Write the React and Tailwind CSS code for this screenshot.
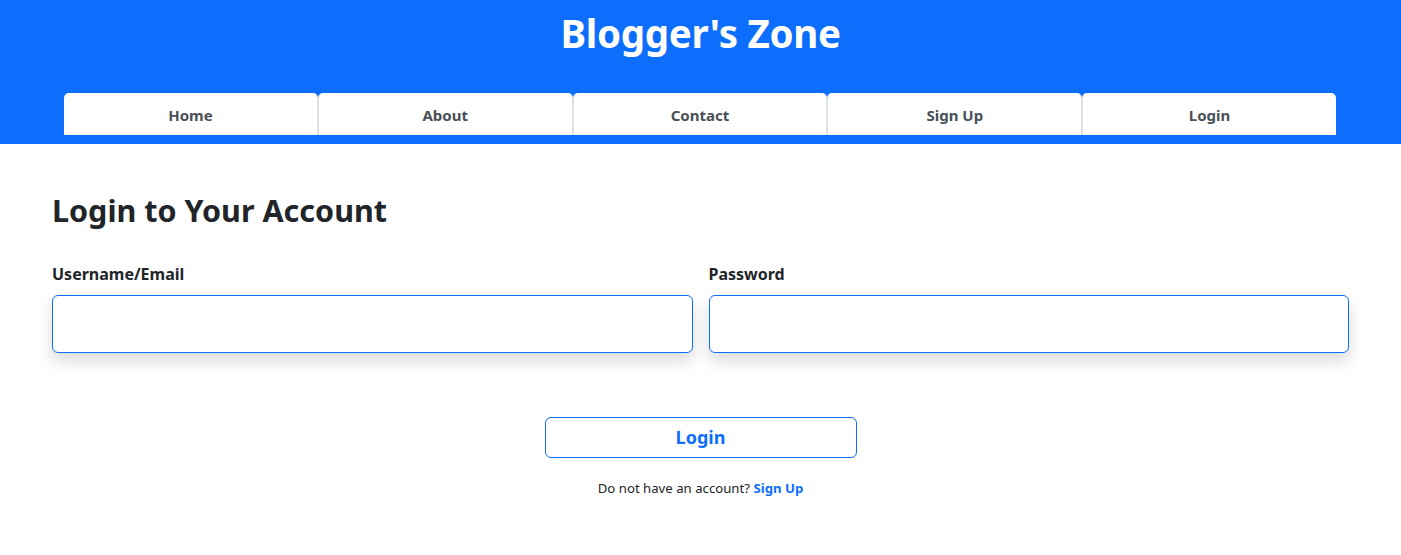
import React from "react";

const font = { fontFamily: '"Noto Sans", "Open Sans", sans-serif' };

export default function App() {
  const tabs = ["Home", "About", "Contact", "Sign Up", "Login"];
  return (
    <div className="min-h-[555px] bg-white text-[#212529]" style={font}>
      <header className="bg-[#0d6efd] pt-[6px] pb-[9px]">
        <h1 className="text-center text-[38.5px] font-bold leading-[54px] text-white tracking-[-0.3px]">
          Blogger's Zone
        </h1>
        <nav className="ml-[64px] mr-[65px] mt-[33px] flex">
          {tabs.map((t, i) => (
            <a
              key={t}
              className={`flex h-[42px] flex-1 items-center justify-center rounded-t-[5px] bg-white pt-[2px] text-[15px] font-bold text-[#495057] ${
                i > 0 ? "border-l border-[#dee2e6]" : ""
              } ${i < tabs.length - 1 ? "border-r border-[#dee2e6]" : ""}`}
            >
              {t}
            </a>
          ))}
        </nav>
      </header>
      <main className="px-[52px] pt-[46px]">
        <h2 className="text-[30.5px] font-bold leading-[40px] text-[#212529]">
          Login to Your Account
        </h2>
        <div className="mt-[32px] grid grid-cols-2 gap-[16px]">
          <div>
            <label className="block text-[16px] font-bold leading-[24px]">
              Username/Email
            </label>
            <input
              type="text"
              className="mt-[9px] block h-[58px] w-full rounded-[6px] border border-[#0d6efd] bg-white shadow-[0_8px_16px_rgba(0,0,0,0.15)] outline-none"
            />
          </div>
          <div>
            <label className="block text-[16px] font-bold leading-[24px]">
              Password
            </label>
            <input
              type="password"
              className="mt-[9px] block h-[58px] w-full rounded-[6px] border border-[#0d6efd] bg-white shadow-[0_8px_16px_rgba(0,0,0,0.15)] outline-none"
            />
          </div>
        </div>
        <div className="mt-[64px] flex flex-col items-center">
          <button className="h-[41px] w-[312px] rounded-[6px] border border-[#0d6efd] bg-white text-[18px] font-bold text-[#0d6efd]">
            Login
          </button>
          <p className="mt-[20px] text-[13.2px] leading-[20px] text-[#212529]">
            Do not have an account?{" "}
            <a className="font-bold text-[#0d6efd]">Sign Up</a>
          </p>
        </div>
      </main>
    </div>
  );
}
